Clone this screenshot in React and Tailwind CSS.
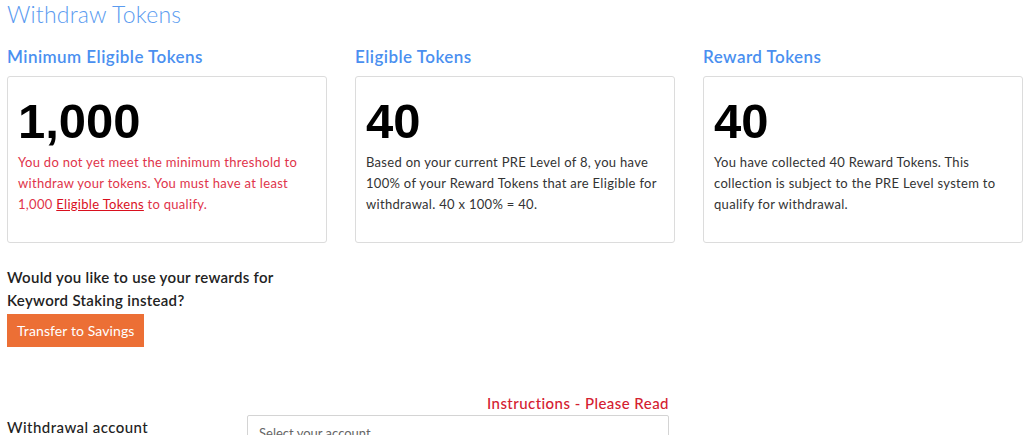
import React from 'react'

const cards = [
  {
    title: 'Minimum Eligible Tokens',
    value: '1,000',
    tone: 'text-[#e0344a]',
    body: (
      <>
        You do not yet meet the minimum threshold to withdraw your tokens. You must have at least 1,000{' '}
        <a href="#" className="underline text-[#d9101e]">Eligible Tokens</a> to qualify.
      </>
    ),
  },
  {
    title: 'Eligible Tokens',
    value: '40',
    tone: 'text-[#333]',
    body: 'Based on your current PRE Level of 8, you have 100% of your Reward Tokens that are Eligible for withdrawal. 40 x 100% = 40.',
  },
  {
    title: 'Reward Tokens',
    value: '40',
    tone: 'text-[#333]',
    body: 'You have collected 40 Reward Tokens. This collection is subject to the PRE Level system to qualify for withdrawal.',
  },
]

function StatCard({ title, value, tone, body }) {
  return (
    <div>
      <h2 className="text-[17px] leading-[24px] font-semibold tracking-[0.45px] text-[#4a8ff0]">{title}</h2>
      <div className="mt-[7px] h-[167px] border border-[#dcdcdc] rounded-[3px] pl-[10px] pr-[12px] pt-[18px]">
        <div className="font-['Liberation_Sans',Arial,sans-serif] font-bold text-[49px] leading-[52px] text-black">{value}</div>
        <p className={`mt-[5px] text-[13px] leading-[21px] tracking-[0.3px] ${tone}`}>{body}</p>
      </div>
    </div>
  )
}

export default function App() {
  return (
    <div className="w-[1024px] h-[435px] overflow-hidden bg-white pl-[7px] pr-[1px] font-['Lato',sans-serif] text-[#333]">
      <h1 className="text-[23px] leading-[28px] font-light tracking-[0.2px] text-[#5a9bf0]">Withdraw Tokens</h1>
      <div className="mt-[17px] grid grid-cols-3 gap-[28px]">
        {cards.map(c => <StatCard key={c.title} {...c} />)}
      </div>

      <p className="mt-[23px] w-[290px] text-[15px] leading-[23px] font-semibold tracking-[0.3px] text-[#222]">
        Would you like to use your rewards for Keyword Staking instead?
      </p>
      <button className="mt-[2px] h-[33px] px-[10px] bg-[#ec6f35] text-white text-[14px] tracking-[0.1px]">Transfer to Savings</button>

      <div className="mt-[46px] w-[662px] grid grid-cols-[240px_1fr]">
        <div />
        <div className="text-right text-[15px] leading-[20px] font-medium tracking-[0.45px] text-[#d42030]">Instructions - Please Read</div>
        <div className="pt-[4px] text-[15px] leading-[20px] font-medium tracking-[0.45px] text-[#222]">Withdrawal account</div>
        <div className="mt-[2px] h-[34px] border border-[#d4d4d4] rounded-[2px] px-[11px] pt-[8px] text-[13px] leading-[18px] text-[#666]">
          Select your account
        </div>
      </div>
    </div>
  )
}
